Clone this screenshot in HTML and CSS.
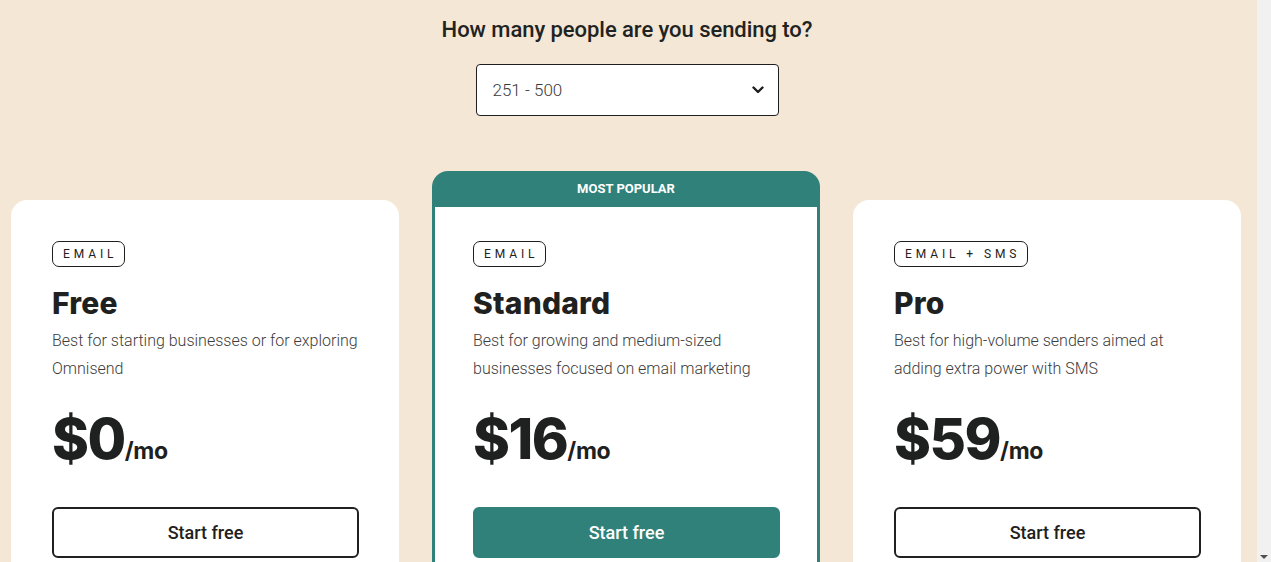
FILE: index.html
```html
<!DOCTYPE html>
<html lang="en">
<head>
<meta charset="utf-8">
<title>Pricing</title>
<link rel="stylesheet" href="styles.css">
</head>
<body>
<div class="frame">
  <main class="page">
    <h2 class="question">How many people are you sending to?</h2>
    <div class="select">
      <span class="select-value">251 - 500</span>
      <svg class="chevron" width="12" height="8" viewBox="0 0 12 8"><path d="M1.5 1.5 L6 6 L10.5 1.5" fill="none" stroke="#1f1f1f" stroke-width="2.4" stroke-linecap="round" stroke-linejoin="round"/></svg>
    </div>
    <div class="plans">
      <section class="card">
        <div class="card-body">
          <span class="badge">EMAIL</span>
          <h3 class="plan-name">Free</h3>
          <p class="plan-desc">Best for starting businesses or for exploring Omnisend</p>
          <div class="price"><span class="amount">$0</span><span class="per">/mo</span></div>
          <button class="btn">Start free</button>
        </div>
      </section>
      <section class="card popular">
        <div class="popular-label">MOST POPULAR</div>
        <div class="card-body">
          <span class="badge">EMAIL</span>
          <h3 class="plan-name">Standard</h3>
          <p class="plan-desc">Best for growing and medium-sized businesses focused on email marketing</p>
          <div class="price"><span class="amount">$16</span><span class="per">/mo</span></div>
          <button class="btn btn-primary">Start free</button>
        </div>
      </section>
      <section class="card">
        <div class="card-body">
          <span class="badge">EMAIL + SMS</span>
          <h3 class="plan-name">Pro</h3>
          <p class="plan-desc">Best for high-volume senders aimed at adding extra power with SMS</p>
          <div class="price"><span class="amount">$59</span><span class="per">/mo</span></div>
          <button class="btn">Start free</button>
        </div>
      </section>
    </div>
  </main>
  <div class="scrollbar"><span class="arrow-down"></span></div>
</div>
</body>
</html>
```

FILE: styles.css
```css
* { box-sizing: border-box; }
html, body { margin: 0; padding: 0; }
body {
  width: 1271px;
  height: 562px;
  overflow: hidden;
  font-family: Roboto, "Liberation Sans", Arial, sans-serif;
  color: #1f2120;
  background: #f4e7d5;
}
.frame {
  display: flex;
  height: 562px;
}
.page {
  flex: 1;
  background: #f4e7d5;
  display: flex;
  flex-direction: column;
  align-items: center;
  padding: 16px 3px 0 0;
  overflow: hidden;
}
.page > * { flex-shrink: 0; }
.scrollbar {
  width: 14px;
  background: #f1f1f1;
  display: flex;
  flex-direction: column;
  justify-content: flex-end;
  align-items: center;
  padding-bottom: 3px;
}
.arrow-down {
  width: 0; height: 0;
  border-left: 4px solid transparent;
  border-right: 4px solid transparent;
  border-top: 4px solid #505050;
}
.question {
  margin: 0;
  font-size: 22px;
  font-weight: 500;
  line-height: 28px;
  color: #212322;
  letter-spacing: -0.05px;
}
.select {
  margin-top: 20px;
  width: 303px;
  height: 52px;
  background: #fff;
  border: 1px solid #1f1f1f;
  border-radius: 4px;
  display: flex;
  align-items: center;
  justify-content: space-between;
  padding: 0 14px 0 16px;
}
.select-value {
  font-size: 17px;
  font-weight: 300;
  color: #3a3a3a;
}
.plans {
  align-self: stretch;
  display: flex;
  gap: 33px;
  padding-left: 11px;
  margin-top: 55px;
  align-items: flex-start;
}
.card {
  width: 388px;
  flex-shrink: 0;
  background: #fff;
  border-radius: 16px;
  margin-top: 29px;
  height: 420px;
}
.card-body {
  padding: 41px 41px 0;
  display: flex;
  flex-direction: column;
  align-items: flex-start;
}
.popular {
  margin-top: 0;
  background: #2f8179;
  padding: 0 3px 3px;
  height: 449px;
}
.popular .card-body {
  background: #fff;
  padding: 34px 38px 0;
  height: 410px;
}
.popular-label {
  height: 36px;
  display: flex;
  align-items: center;
  justify-content: center;
  color: #fff;
  font-size: 13px;
  font-weight: 700;
  padding-bottom: 1px;
}
.badge {
  display: inline-block;
  height: 26px;
  line-height: 24px;
  border: 1px solid #1f1f1f;
  border-radius: 7px;
  padding: 0 7px 0 10px;
  font-size: 12px;
  font-weight: 400;
  letter-spacing: 3.9px;
  color: #1f2120;
}
.plan-name {
  margin: 18px 0 0;
  font-family: Inter, "Liberation Sans", sans-serif;
  font-size: 30px;
  font-weight: 800;
  line-height: 36px;
  letter-spacing: 0.2px;
  color: #1f2120;
}
.plan-desc {
  margin: 6px 0 0;
  font-size: 16px;
  font-weight: 300;
  line-height: 28px;
  color: #3c3c3c;
  max-width: 310px;
}
.price {
  margin-top: 24px;
  display: flex;
  align-items: baseline;
  color: #1f2120;
  font-family: Inter, "Liberation Sans", sans-serif;
}
.amount {
  font-size: 56px;
  font-weight: 800;
  line-height: 64px;
  letter-spacing: -1.5px;
}
.per {
  font-size: 23px;
  font-weight: 700;
  letter-spacing: -0.3px;
}
.btn {
  margin-top: 36px;
  width: 307px;
  height: 51px;
  border: 2px solid #1f2120;
  border-radius: 6px;
  background: #fff;
  font-family: Roboto, "Liberation Sans", sans-serif;
  font-size: 18px;
  font-weight: 500;
  color: #1f2120;
  cursor: pointer;
}
.btn-primary {
  background: #2f8179;
  border-color: #2f8179;
  color: #fff;
}
```
